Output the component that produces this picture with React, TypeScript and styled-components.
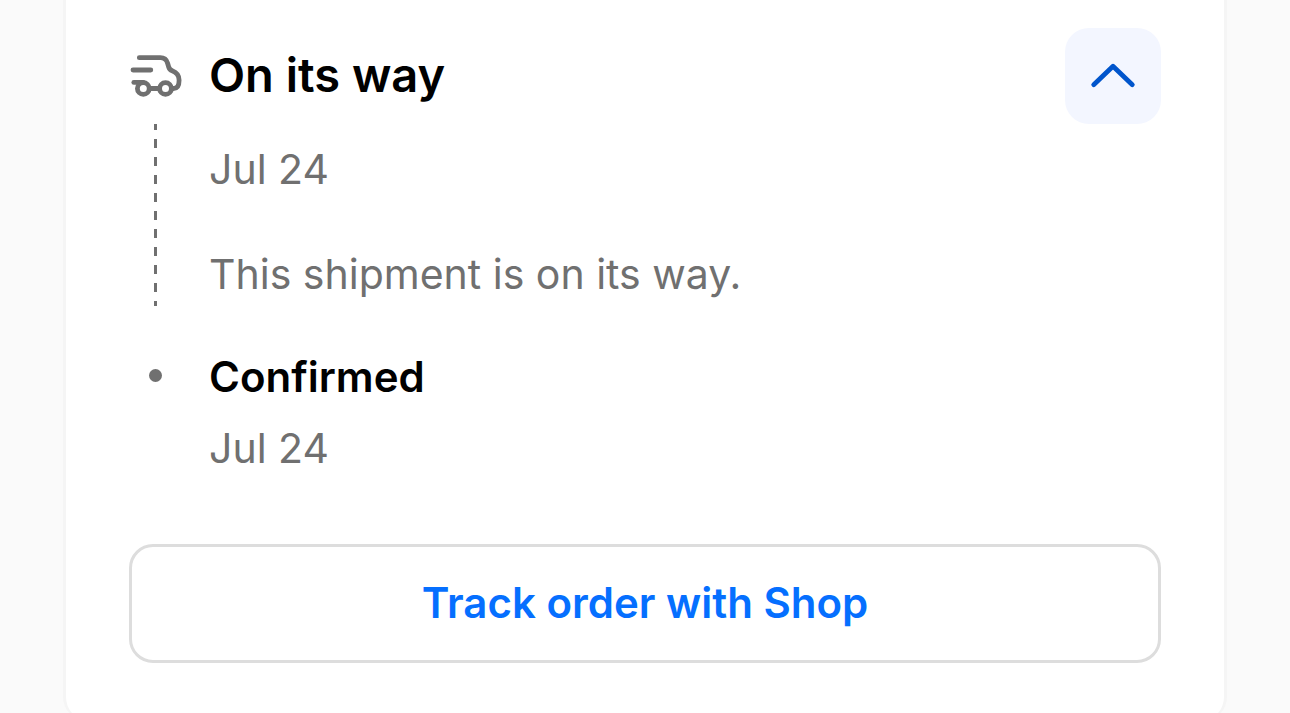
import React, { useState } from "react";
import styled, { createGlobalStyle } from "styled-components";

const color = {
  page: "#fafafa",
  card: "#ffffff",
  cardEdge: "#f5f5f5",
  outline: "#dddddd",
  text: "#000000",
  subdued: "#707070",
  accent: "#056fff",
  toggle: "#0055cc",
  toggleSurface: "#f3f6ff",
};

const GlobalStyle = createGlobalStyle`
  *, *::before, *::after { box-sizing: border-box; }
  html { scrollbar-width: none; }
  body {
    margin: 0;
    background: ${color.page};
    color: ${color.text};
    font-family: Inter, "Liberation Sans", sans-serif;
    font-size: 41px;
    line-height: 63px;
  }
`;

const Page = styled.main`
  padding: 0 63px 63px;
`;

const Card = styled.section`
  padding: 28px 63px 57px;
  background: ${color.card};
  border: 3px solid ${color.cardEdge};
  border-top: 0;
  border-bottom-width: 1px;
  border-radius: 0 0 24px 24px;
`;

const Timeline = styled.ol`
  display: grid;
  gap: 39px;
  margin: 0 0 64px;
  padding: 0;
  list-style: none;
`;

const Step = styled.li`
  display: grid;
  grid-template-columns: 53px 1fr;
  column-gap: 27px;
`;

const Marker = styled.div<{ $height: number }>`
  display: flex;
  align-items: center;
  justify-content: center;
  height: ${(p) => p.$height}px;
`;

const Dot = styled.span`
  width: 13px;
  height: 13px;
  border-radius: 50%;
  background: ${color.subdued};
`;

const Connector = styled.div`
  width: 3px;
  justify-self: center;
  background: repeating-linear-gradient(
    ${color.subdued} 0 6px,
    transparent 6px 15px,
    ${color.subdued} 15px 18px
  );
`;

const Header = styled.div`
  display: flex;
  align-items: center;
  justify-content: space-between;
`;

const Title = styled.h2`
  margin: 0;
  padding-bottom: 3px;
  font-size: 47px;
  font-weight: 600;
`;

const Subtitle = styled.h3`
  margin: 0;
  font-size: 42px;
  font-weight: 600;
`;

const Details = styled.div<{ $top: number; $gap: number }>`
  display: grid;
  gap: ${(p) => p.$gap}px;
  padding-top: ${(p) => p.$top}px;
`;

const Text = styled.p`
  margin: 0;
  color: ${color.subdued};
`;

const ToggleButton = styled.button`
  display: flex;
  align-items: center;
  justify-content: center;
  width: 96px;
  height: 96px;
  padding: 0;
  border: 0;
  border-radius: 24px;
  background: ${color.toggleSurface};
  color: ${color.toggle};
  cursor: pointer;
`;

const TrackLink = styled.a`
  display: block;
  padding: 24px 25px 26px;
  border: 3px solid ${color.outline};
  border-radius: 24px;
  color: ${color.accent};
  font-size: 42px;
  font-weight: 600;
  text-align: center;
  text-decoration: none;
`;

const TruckIcon = () => (
  <svg
    width="53"
    height="54"
    viewBox="0 0 53 54"
    fill="none"
    stroke={color.subdued}
    strokeWidth="4.8"
    strokeLinecap="round"
    strokeLinejoin="round"
    aria-hidden="true"
  >
    <path d="M10.3 8.7H31.3C35 8.7 37.6 10.8 38.6 14.2L39.7 18C40.3 20.2 41.2 21 43.2 21.8C47.6 23.5 50.1 26.6 50.1 31.2C50.1 36.6 48.6 39.5 44.5 39.5H43.2" />
    <path d="M4 21H21.8" />
    <path d="M4.8 33.4H14.3" />
    <circle cx="14.3" cy="39.5" r="5.9" />
    <circle cx="36.5" cy="39.5" r="5.9" />
    <path d="M21 39.5H30" />
  </svg>
);

const ChevronIcon = ({ open }: { open: boolean }) => (
  <svg
    width="48"
    height="48"
    viewBox="0 0 48 48"
    fill="none"
    stroke="currentColor"
    strokeWidth="4.8"
    strokeLinecap="round"
    strokeLinejoin="round"
    aria-hidden="true"
  >
    <path d={open ? "M4.7 32.7L24 14.2L43.3 32.7" : "M4.7 15.3L24 33.8L43.3 15.3"} />
  </svg>
);

export default function App() {
  const [open, setOpen] = useState(true);

  return (
    <>
      <GlobalStyle />
      <Page>
        <Card>
          <Timeline>
            <Step>
              <Marker $height={96}>
                <TruckIcon />
              </Marker>
              <Header>
                <Title>On its way</Title>
                <ToggleButton
                  type="button"
                  aria-label="Shipment details"
                  aria-expanded={open}
                  onClick={() => setOpen(!open)}
                >
                  <ChevronIcon open={open} />
                </ToggleButton>
              </Header>
              {open && (
                <>
                  <Connector />
                  <Details $top={14} $gap={42}>
                    <Text>Jul 24</Text>
                    <Text>This shipment is on its way.</Text>
                  </Details>
                </>
              )}
            </Step>
            <Step>
              <Marker $height={60}>
                <Dot />
              </Marker>
              <Details $top={0} $gap={9}>
                <Subtitle>Confirmed</Subtitle>
                <Text>Jul 24</Text>
              </Details>
            </Step>
          </Timeline>
          <TrackLink href="#track">Track order with Shop</TrackLink>
        </Card>
      </Page>
    </>
  );
}
